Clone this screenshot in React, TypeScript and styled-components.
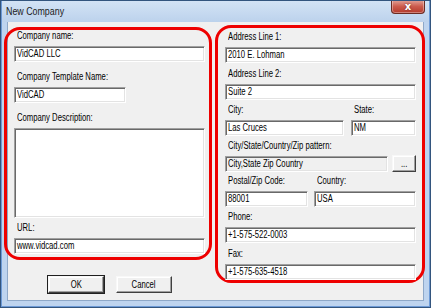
import React from "react";
import styled, { createGlobalStyle } from "styled-components";

const GlobalStyle = createGlobalStyle`
  html, body {
    margin: 0;
    padding: 0;
    background: #ffffff;
  }
  body {
    font-family: "Liberation Sans", Arial, sans-serif;
  }
`;

// the dialog font is narrow, so the text is squeezed sideways
const Narrow = styled.span<{ $center?: boolean }>`
  display: inline-block;
  white-space: nowrap;
  transform: scaleX(0.77);
  transform-origin: ${(p) => (p.$center ? "50% 50%" : "0 50%")};
`;

const Window = styled.div`
  width: 431px;
  height: 308px;
  box-sizing: border-box;
  border: 1px solid #33557e;
  display: flex;
  flex-direction: column;
  background: #f0f0f0;
  box-shadow: inset 0 0 0 1px #6d9ad6, inset 0 0 0 6px #bed4ef,
    inset 0 0 0 7px #8ea8c8;
  overflow: hidden;
`;

const TitleBar = styled.div`
  height: 21px;
  flex: none;
  display: flex;
  align-items: flex-start;
  background: linear-gradient(#d3e3f5, #bcd2ec);
  box-shadow: inset 1px 0 0 #6d9ad6, inset -1px 0 0 #6d9ad6;
`;

const Title = styled.div`
  margin: 3px 0 0 5px;
  font-size: 11.5px;
  line-height: 14px;
  color: #1b1b1b;
  flex: 1;
`;

const CloseButton = styled.div`
  width: 34px;
  height: 14px;
  margin: -1px 5px 0 0;
  box-sizing: border-box;
  border: 1px solid #6b2b22;
  border-top: none;
  border-radius: 0 0 4px 4px;
  background: linear-gradient(#e3a59a, #cc5b4c 50%, #b53a2c);
  box-shadow: inset 0 0 0 1px rgba(255, 255, 255, 0.35);
  display: flex;
  align-items: center;
  justify-content: center;
  color: #ffffff;
  font-family: "DejaVu Sans", sans-serif;
  font-size: 10px;
  font-weight: bold;
  text-shadow: 0 0 2px #6b2b22;
`;

const Content = styled.div`
  display: flex;
  align-items: flex-start;
  gap: 3px;
  padding-left: 3px;
`;

const LeftColumn = styled.div`
  display: flex;
  flex-direction: column;
  margin-top: 5px;
`;

const Panel = styled.div<{ $w: number; $h: number; $top?: number; $pr: number }>`
  box-sizing: border-box;
  width: ${(p) => p.$w}px;
  height: ${(p) => p.$h}px;
  margin-top: ${(p) => p.$top ?? 0}px;
  border: 3px solid #ee0000;
  border-radius: 16px;
  padding: 0 ${(p) => p.$pr}px 0 7px;
  display: flex;
  flex-direction: column;
`;

const Field = styled.div<{ $mt?: number; $w?: number }>`
  display: flex;
  flex-direction: column;
  margin-top: ${(p) => p.$mt ?? 0}px;
  width: ${(p) => (p.$w ? `${p.$w}px` : "auto")};
  flex: ${(p) => (p.$w ? "none" : "1")};
`;

const Label = styled.div`
  height: 12px;
  line-height: 12px;
  margin: 0 0 4px 3px;
  font-size: 10px;
  color: #000000;
  white-space: nowrap;
`;

const TextBox = styled.div<{ $w?: number; $h?: number; $readOnly?: boolean }>`
  box-sizing: border-box;
  width: ${(p) => (p.$w ? `${p.$w}px` : "100%")};
  height: ${(p) => p.$h ?? 16}px;
  padding: 0 2px;
  border: 1px solid;
  border-color: #a0a0a0 #ffffff #ffffff #a0a0a0;
  box-shadow: inset 1px 1px 0 #696969, inset -1px -1px 0 #e3e3e3;
  background: ${(p) => (p.$readOnly ? "#f0f0f0" : "#ffffff")};
  font-size: 10px;
  line-height: 14px;
  color: #000000;
  white-space: nowrap;
  overflow: hidden;
`;

const Row = styled.div<{ $gap: number; $mt?: number }>`
  display: flex;
  align-items: flex-end;
  gap: ${(p) => p.$gap}px;
  margin-top: ${(p) => p.$mt ?? 0}px;
`;

const ButtonRow = styled.div`
  display: flex;
  gap: 12px;
  margin-top: 16px;
  padding-left: 44px;
`;

const Button = styled.div<{ $w: number; $h: number }>`
  box-sizing: border-box;
  width: ${(p) => p.$w}px;
  height: ${(p) => p.$h}px;
  border: 1px solid;
  border-color: #f8f8f8 #404040 #404040 #f8f8f8;
  box-shadow: inset -1px -1px 0 #a0a0a0, inset 1px 1px 0 #ffffff;
  background: #f0f0f0;
  display: flex;
  align-items: center;
  justify-content: center;
  font-size: 10px;
  color: #000000;
`;

const DefaultButton = styled(Button)`
  outline: 1px solid #202020;
`;

type FieldProps = {
  label: string;
  value: string;
  mt?: number;
  w?: number;
  boxW?: number;
  h?: number;
};

const LabeledBox = ({ label, value, mt, w, boxW, h }: FieldProps) => (
  <Field $mt={mt} $w={w}>
    <Label>
      <Narrow>{label}</Narrow>
    </Label>
    <TextBox $w={boxW} $h={h}>
      <Narrow>{value}</Narrow>
    </TextBox>
  </Field>
);

export default function App() {
  return (
    <>
      <GlobalStyle />
      <Window>
        <TitleBar>
          <Title>
            <Narrow>New Company</Narrow>
          </Title>
          <CloseButton>x</CloseButton>
        </TitleBar>
        <Content>
          <LeftColumn>
            <Panel $w={208} $h={233} $pr={4}>
              <LabeledBox label="Company name:" value="VidCAD LLC" />
              <LabeledBox
                label="Company Template Name:"
                value="VidCAD"
                mt={6}
                boxW={112}
              />
              <LabeledBox label="Company Description:" value="" mt={7} h={90} />
              <LabeledBox label="URL:" value="www.vidcad.com" mt={4} />
            </Panel>
            <ButtonRow>
              <DefaultButton $w={56} $h={17}>
                <Narrow $center>OK</Narrow>
              </DefaultButton>
              <Button $w={56} $h={17}>
                <Narrow $center>Cancel</Narrow>
              </Button>
            </ButtonRow>
          </LeftColumn>
          <Panel $w={210} $h={258} $top={3} $pr={6}>
            <LabeledBox label="Address Line 1:" value="2010 E. Lohman" mt={3} />
            <LabeledBox label="Address Line 2:" value="Suite 2" mt={4} />
            <Row $gap={7} $mt={4}>
              <LabeledBox label="City:" value="Las Cruces" w={119} />
              <LabeledBox label="State:" value="NM" />
            </Row>
            <Row $gap={4} $mt={4}>
              <Field>
                <Label>
                  <Narrow>City/State/Country/Zip pattern:</Narrow>
                </Label>
                <TextBox $readOnly>
                  <Narrow>City,State Zip Country</Narrow>
                </TextBox>
              </Field>
              <Button $w={24} $h={17}>
                <Narrow $center>...</Narrow>
              </Button>
            </Row>
            <Row $gap={6} $mt={3}>
              <LabeledBox label="Postal/Zip Code:" value="88001" w={83} />
              <LabeledBox label="Country:" value="USA" />
            </Row>
            <LabeledBox label="Phone:" value="+1-575-522-0003" mt={4} />
            <LabeledBox label="Fax:" value="+1-575-635-4518" mt={4} />
          </Panel>
        </Content>
      </Window>
    </>
  );
}
